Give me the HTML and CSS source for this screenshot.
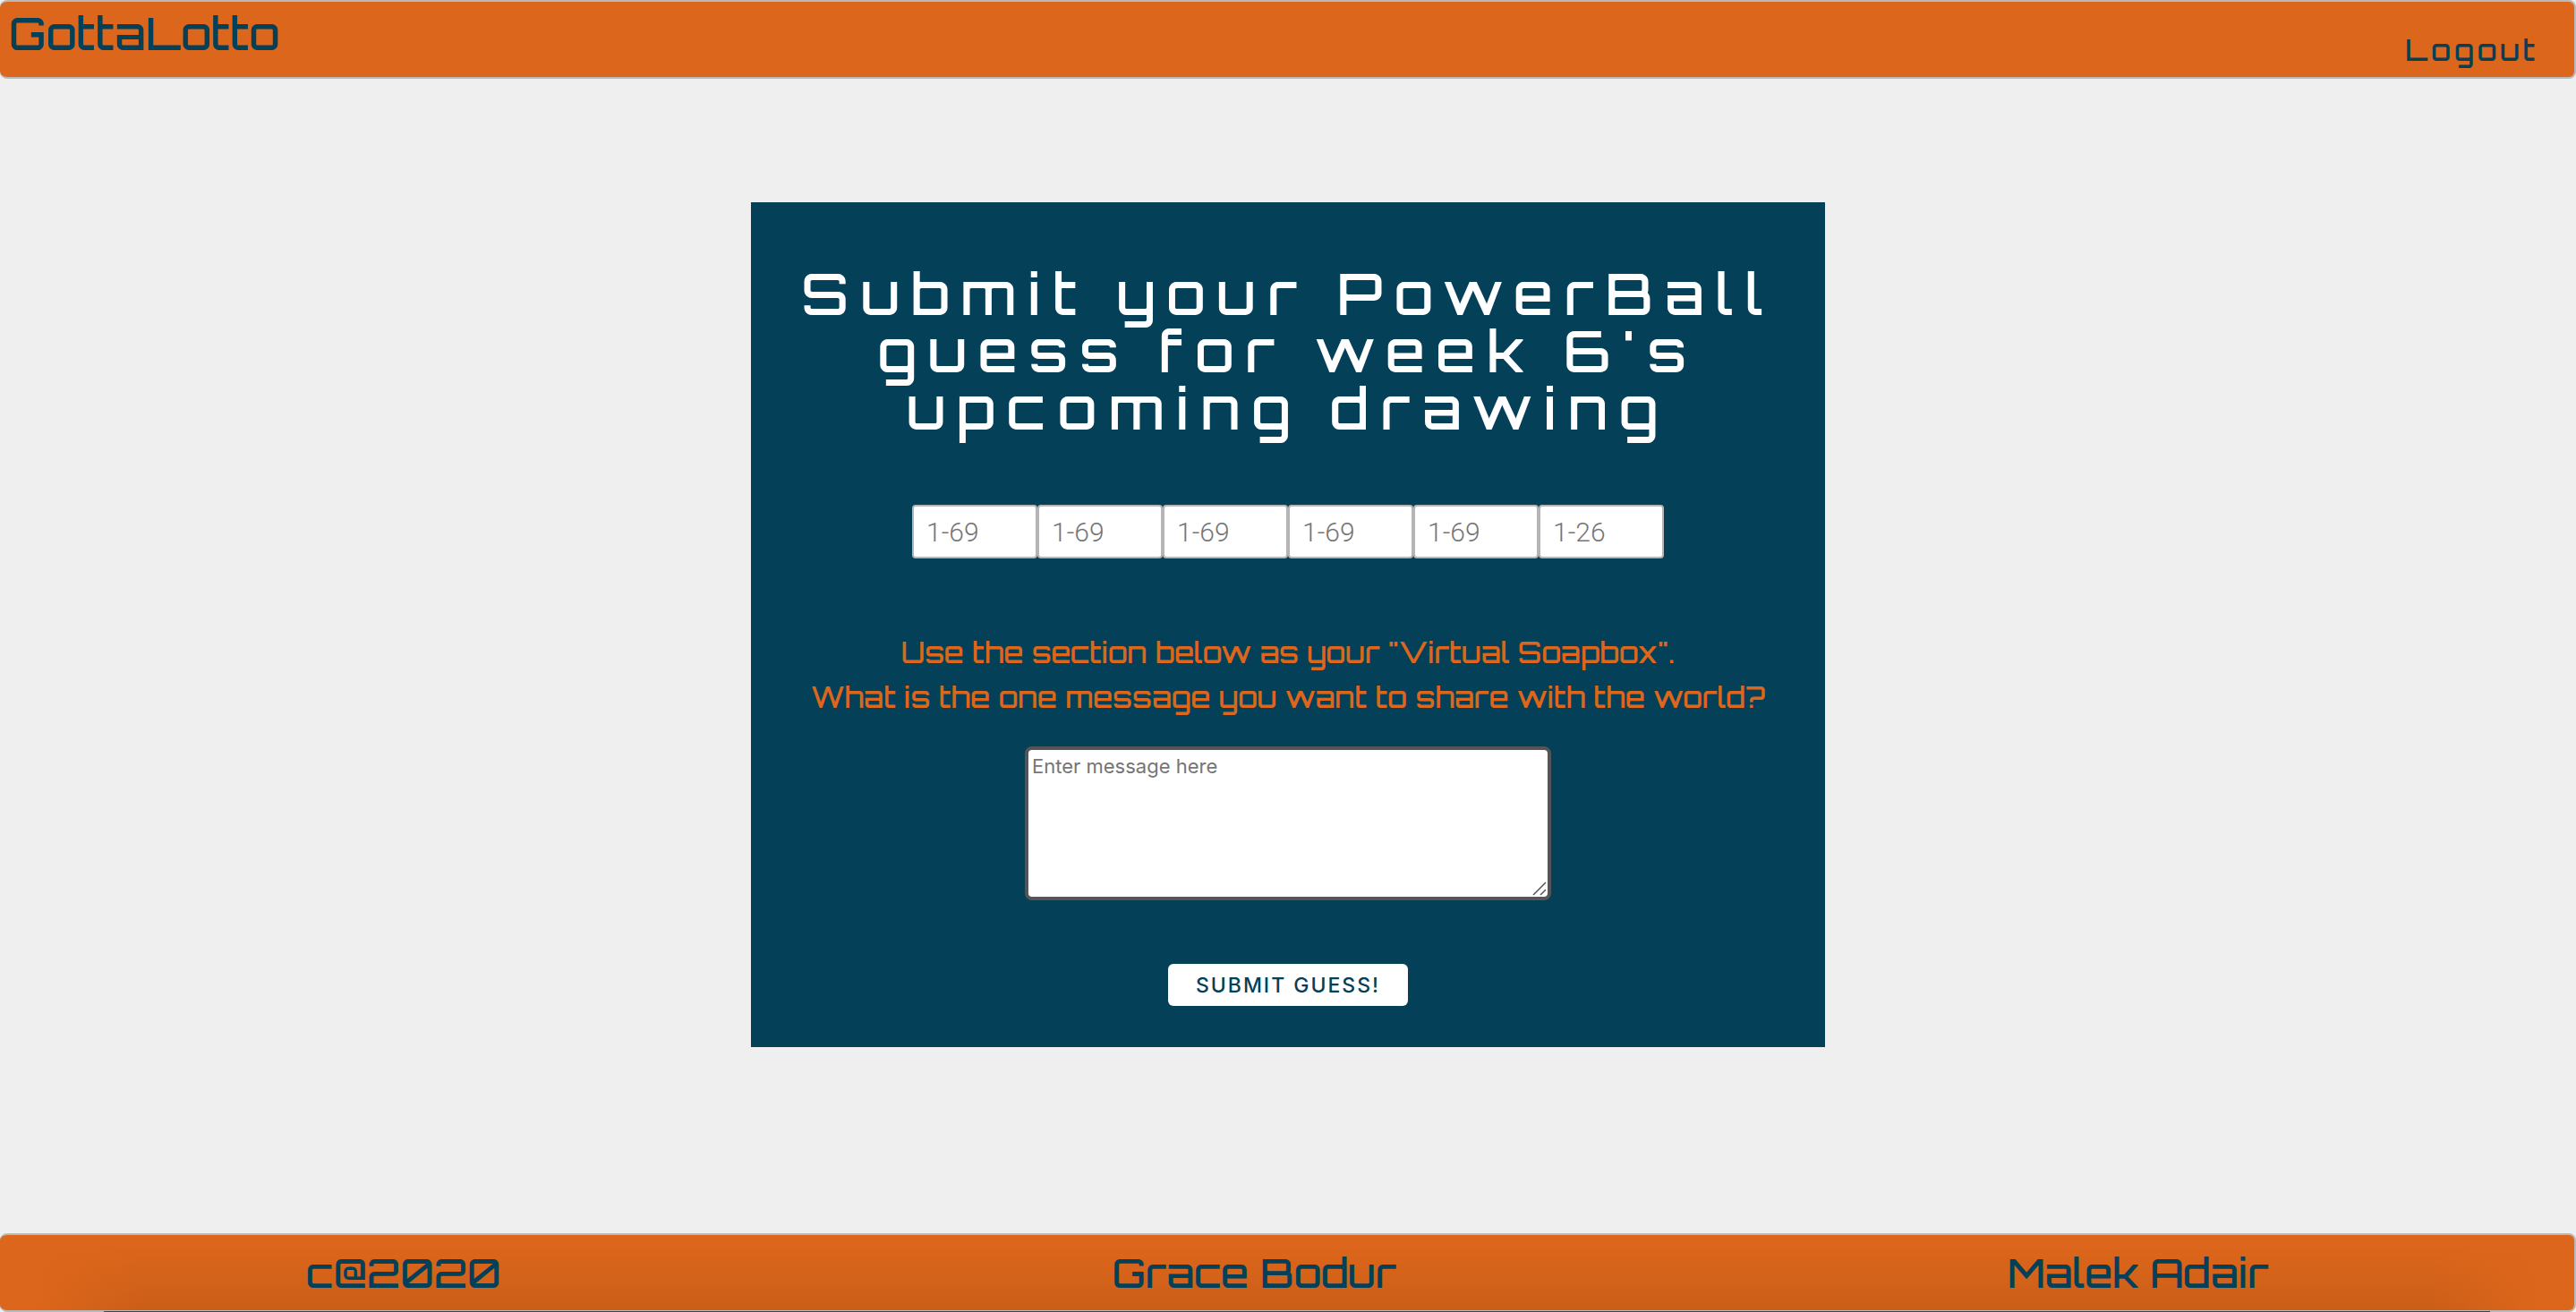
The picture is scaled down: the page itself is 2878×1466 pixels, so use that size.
FILE: index.html
```html
<!DOCTYPE html>
<html lang="en">
<head>
  <meta charset="utf-8">
  <title>GottaLotto</title>
  <link rel="stylesheet" href="styles.css">
</head>
<body>
  <header class="bar navbar">
    <span class="brand">GottaLotto</span>
    <a class="logout" href="#">Logout</a>
  </header>

  <main class="content">
    <form class="card">
      <h1 class="card-title">Submit your PowerBall guess for week 6's upcoming drawing</h1>
      <div class="numbers">
        <input class="number" type="text" placeholder="1-69" aria-label="First number">
        <input class="number" type="text" placeholder="1-69" aria-label="Second number">
        <input class="number" type="text" placeholder="1-69" aria-label="Third number">
        <input class="number" type="text" placeholder="1-69" aria-label="Fourth number">
        <input class="number" type="text" placeholder="1-69" aria-label="Fifth number">
        <input class="number" type="text" placeholder="1-26" aria-label="PowerBall number">
      </div>
      <label class="prompt" for="message">Use the section below as your "Virtual Soapbox".<br>What is the one message you want to share with the world?</label>
      <div class="message-box">
        <textarea class="message" id="message" placeholder="Enter message here"></textarea>
        <svg class="grip" width="16" height="16" viewBox="0 0 16 16" aria-hidden="true"><path d="M1 15 15 1M9 15l6-6" fill="none" stroke="#555" stroke-width="1.5"/></svg>
      </div>
      <button class="submit" type="submit">SUBMIT GUESS!</button>
    </form>
  </main>

  <footer class="bar footer">
    <span>c@2020</span>
    <span>Grace Bodur</span>
    <span>Malek Adair</span>
  </footer>
</body>
</html>
```
FILE: styles.css
```css
* {
  box-sizing: border-box;
}

body {
  display: flex;
  flex-direction: column;
  min-height: 100vh;
  margin: 0;
  background: #efefef;
  color: #054059;
  font-family: Orbitron, "DejaVu Sans", sans-serif;
  font-weight: 500;
}

.bar {
  display: flex;
  height: 88px;
  border: 2px solid #b9b9b9;
  border-left: 0;
  border-radius: 8px;
  background: #dc661b;
}

.navbar {
  justify-content: space-between;
  padding: 0 40px 0 10px;
}

.brand {
  font-size: 50px;
  line-height: 70px;
}

.logout {
  align-self: flex-end;
  color: inherit;
  font-size: 32px;
  line-height: 60px;
  letter-spacing: 4px;
  text-decoration: none;
}

.content {
  display: flex;
  flex: 1;
  align-items: flex-start;
  justify-content: center;
  padding: 138px 24px;
}

.card {
  display: flex;
  flex-direction: column;
  align-items: center;
  width: 100%;
  max-width: 1200px;
  padding: 70px 48px 46px;
  background: #054059;
}

.card-title {
  margin: 0 0 76px;
  color: #fff;
  font-size: 64px;
  font-weight: 500;
  line-height: 64px;
  letter-spacing: 13px;
  text-align: center;
}

.numbers {
  display: flex;
  margin-bottom: 80px;
}

.number {
  width: 140px;
  height: 60px;
  padding: 0 14px;
  border: 2px solid #b5b5b5;
  border-radius: 4px;
  background: #fff;
  font-family: "Helvetica Neue", Roboto, "Liberation Sans", sans-serif;
  font-size: 30px;
  font-weight: 300;
}

.number::placeholder,
.message::placeholder {
  color: #757575;
  opacity: 1;
}

.prompt {
  margin-bottom: 30px;
  color: #dc661b;
  font-size: 32px;
  line-height: 50px;
  text-align: center;
}

.message-box {
  position: relative;
  margin-bottom: 71px;
}

.message {
  display: block;
  width: 588px;
  height: 172px;
  padding: 4px;
  border: 4px solid #555;
  border-radius: 8px;
  background: #fff;
  font-family: Inter, sans-serif;
  font-size: 22px;
  line-height: 28px;
  resize: none;
}

.grip {
  position: absolute;
  right: 5px;
  bottom: 5px;
}

.submit {
  width: 268px;
  height: 47px;
  padding: 0;
  border: 0;
  border-radius: 6px;
  background: #fff;
  color: #054059;
  font-family: Inter, sans-serif;
  font-size: 23px;
  font-weight: 500;
  letter-spacing: 2px;
}

.footer {
  position: relative;
  align-items: center;
  justify-content: space-around;
  background:
    linear-gradient(to right, #dc661b 40px, transparent 160px calc(100% - 160px), #dc661b calc(100% - 40px)),
    linear-gradient(#dc661b 15%, #cb5e18);
  font-size: 45px;
}

/* Dark edge under the footer */
.footer::after {
  position: absolute;
  right: 94px;
  bottom: -2px;
  left: 116px;
  height: 1px;
  background: #444;
  content: "";
}
```
